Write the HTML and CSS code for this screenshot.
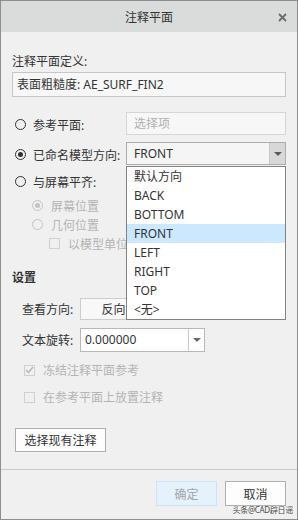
FILE: index.html
```html
<!DOCTYPE html>
<html lang="zh-CN">
<head>
    <meta charset="UTF-8">
    <title>注释平面</title>
    <link rel="stylesheet" href="styles.css">
</head>
<body>
    <div class="dialog">
        <div class="titlebar">
            <span class="title">注释平面</span>
            <svg class="close" width="9" height="9" viewBox="0 0 9 9">
                <path d="M1 1 L8 8 M8 1 L1 8" stroke="#6b6b6b" stroke-width="1.8"/>
            </svg>
        </div>

        <div class="content">
            <div class="def-label">注释平面定义:</div>
            <div class="def-field">表面粗糙度: AE_SURF_FIN2</div>

            <div class="opt-row first">
                <label class="radio-label"><span class="radio"></span>参考平面:</label>
                <div class="pick-field">选择项</div>
            </div>
            <div class="opt-row">
                <label class="radio-label"><span class="radio checked"></span>已命名模型方向:</label>
                <div class="select">
                    <span class="select-value">FRONT</span>
                    <span class="select-btn"><span class="arrow"></span></span>
                </div>
            </div>
            <div class="line-row screen">
                <label class="radio-label"><span class="radio"></span>与屏幕平齐:</label>
            </div>

            <div class="sub-group">
                <div class="line-row sub"><span class="radio checked off"></span><span class="off-text">屏幕位置</span></div>
                <div class="line-row sub"><span class="radio off"></span><span class="off-text">几何位置</span></div>
                <div class="line-row subsub"><span class="check off"></span><span class="off-text">以模型单位</span></div>
            </div>

            <div class="section-title">设置</div>

            <div class="set-row view">
                <span class="set-label">查看方向:</span>
                <button class="btn flip">反向</button>
            </div>
            <div class="set-row rotate">
                <span class="set-label">文本旋转:</span>
                <div class="combo">
                    <span class="combo-value">0.000000</span>
                    <span class="combo-btn"><span class="arrow"></span></span>
                </div>
            </div>

            <div class="line-row check-row first-check"><span class="check off checked-box">
                <svg width="9" height="8" viewBox="0 0 9 8"><path d="M1 4 L3.5 6.5 L8 1" fill="none" stroke="#b4b4b4" stroke-width="1.3"/></svg>
            </span><span class="off-text">冻结注释平面参考</span></div>
            <div class="line-row check-row"><span class="check off"></span><span class="off-text">在参考平面上放置注释</span></div>

            <button class="btn pick-btn">选择现有注释</button>
        </div>

        <div class="footer">
            <button class="btn ok" disabled>确定</button>
            <button class="btn cancel">取消</button>
        </div>

        <!-- open dropdown of the named orientation select -->
        <ul class="dropdown">
            <li>默认方向</li>
            <li>BACK</li>
            <li>BOTTOM</li>
            <li class="active">FRONT</li>
            <li>LEFT</li>
            <li>RIGHT</li>
            <li>TOP</li>
            <li>&lt;无&gt;</li>
        </ul>

        <span class="watermark">头条@CAD辟日谣</span>
    </div>
</body>
</html>
```

FILE: styles.css
```css
body {
    margin: 0;
    font-family: "Segoe UI", "Noto Sans", "Noto Sans CJK SC", sans-serif;
    font-size: 12px;
    color: #333;
    background: #f0f0f0;
}

.dialog {
    position: relative;
    width: 298px;
    height: 520px;
    box-sizing: border-box;
    border: 1px solid #8e8e8e;
    background: #f0f0f0;
    display: flex;
    flex-direction: column;
}

.titlebar {
    height: 31px;
    background: #dadcdc;
    display: flex;
    align-items: center;
    justify-content: center;
    position: relative;
}

.title {
    font-size: 12px;
    color: #333;
}

.close {
    position: absolute;
    right: 10px;
    top: 12px;
}

.content {
    padding: 0 11px;
    display: flex;
    flex-direction: column;
    flex: 1;
}

.def-label {
    margin-top: 22px;
    line-height: 16px;
}

.def-field {
    margin-top: 2px;
    height: 25px;
    box-sizing: border-box;
    border: 1px solid #c6c6c6;
    background: #f7f7f7;
    padding-left: 4px;
    line-height: 23px;
}

.opt-row {
    display: flex;
    height: 23px;
    margin-top: 7px;
}

.opt-row.first {
    margin-top: 15px;
}

.radio-label {
    width: 114px;
    display: flex;
    align-items: center;
    padding-top: 2px;
}

.radio {
    width: 11px;
    height: 11px;
    box-sizing: border-box;
    border: 1px solid #333;
    border-radius: 50%;
    margin: 0 7px 0 3px;
    position: relative;
    flex-shrink: 0;
}

.radio.checked::after {
    content: "";
    position: absolute;
    left: 2px;
    top: 2px;
    width: 5px;
    height: 5px;
    border-radius: 50%;
    background: #333;
}

.radio.off {
    border-color: #c4c4c4;
}

.radio.off.checked::after {
    background: #c4c4c4;
}

.pick-field {
    flex: 1;
    box-sizing: border-box;
    border: 1px solid #d6d6d6;
    background: #f7f7f7;
    color: #b0b0b0;
    padding-left: 7px;
    line-height: 21px;
}

.select {
    flex: 1;
    display: flex;
    box-sizing: border-box;
    border: 1px solid #adadad;
    background: #f5f5f5;
}

.select-value {
    flex: 1;
    padding-left: 7px;
    line-height: 21px;
}

.select-btn {
    width: 15px;
    background: #d8d8d8;
    border-left: 1px solid #c6c6c6;
    display: flex;
    align-items: center;
    justify-content: center;
}

.arrow {
    width: 0;
    height: 0;
    border-left: 4px solid transparent;
    border-right: 4px solid transparent;
    border-top: 4px solid #5a5a5a;
}

.line-row {
    display: flex;
    align-items: center;
    height: 19px;
}

.line-row.screen {
    margin-top: 6px;
}

.sub-group {
    margin-top: 6px;
}

.line-row.sub {
    padding-left: 17px;
}

.line-row.sub .radio {
    margin: 0 8px 0 3px;
}

.line-row.subsub {
    padding-left: 37px;
}

.off-text {
    color: #b4b4b4;
}

.check {
    width: 11px;
    height: 11px;
    box-sizing: border-box;
    border: 1px solid #333;
    margin-right: 8px;
    flex-shrink: 0;
    display: flex;
    align-items: center;
    justify-content: center;
}

.check.off {
    border-color: #d0d0d0;
}

.section-title {
    margin-top: 16px;
    height: 18px;
    line-height: 18px;
    font-weight: bold;
}

.set-row {
    display: flex;
    align-items: center;
    padding-left: 10px;
}

.set-row.view {
    margin-top: 11px;
    height: 22px;
}

.set-row.rotate {
    margin-top: 8px;
    height: 24px;
}

.set-label {
    width: 58px;
}

.btn {
    font-family: inherit;
    font-size: 12px;
    color: #333;
    background: #fdfdfd;
    border: 1px solid #adadad;
    padding: 0;
    box-sizing: border-box;
}

.flip {
    width: 67px;
    height: 22px;
    border-color: #cdcdcd;
    background: #f8f8f8;
}

.combo {
    width: 125px;
    height: 24px;
    display: flex;
    box-sizing: border-box;
    border: 1px solid #b8b8b8;
    background: #fff;
}

.combo-value {
    flex: 1;
    padding-left: 4px;
    line-height: 22px;
}

.combo-btn {
    width: 15px;
    border-left: 1px solid #c8c8c8;
    display: flex;
    align-items: center;
    justify-content: center;
}

.combo-btn .arrow {
    border-top-color: #6a6a6a;
}

.check-row {
    height: 18px;
    margin-top: 9px;
    padding-left: 12px;
}

.check-row .check {
    margin-right: 8px;
}

.pick-btn {
    margin-top: 22px;
    margin-left: 3px;
    width: 91px;
    height: 24px;
}

.footer {
    height: 50px;
    border-top: 1px solid #c8c8c8;
    display: flex;
    justify-content: flex-end;
    gap: 8px;
    padding: 11px 11px 0 0;
    box-sizing: border-box;
}

.footer .btn {
    width: 61px;
    height: 25px;
}

.footer .ok {
    background: #e5f1fb;
    border-color: #cce4f7;
    color: #a6a6a6;
}

.dropdown {
    position: absolute;
    left: 125px;
    top: 165px;
    width: 160px;
    margin: 0;
    padding: 0;
    list-style: none;
    box-sizing: border-box;
    border: 1px solid #828282;
    background: #fff;
}

.dropdown li {
    height: 19px;
    line-height: 19px;
    padding-left: 7px;
}

.dropdown li.active {
    background: #cce8ff;
}

.watermark {
    position: absolute;
    right: 4px;
    top: 504px;
    font-size: 8px;
    line-height: 10px;
    letter-spacing: -0.3px;
    color: #4a4a4a;
    text-shadow: 0 0 2px #fff;
    white-space: nowrap;
}
```
